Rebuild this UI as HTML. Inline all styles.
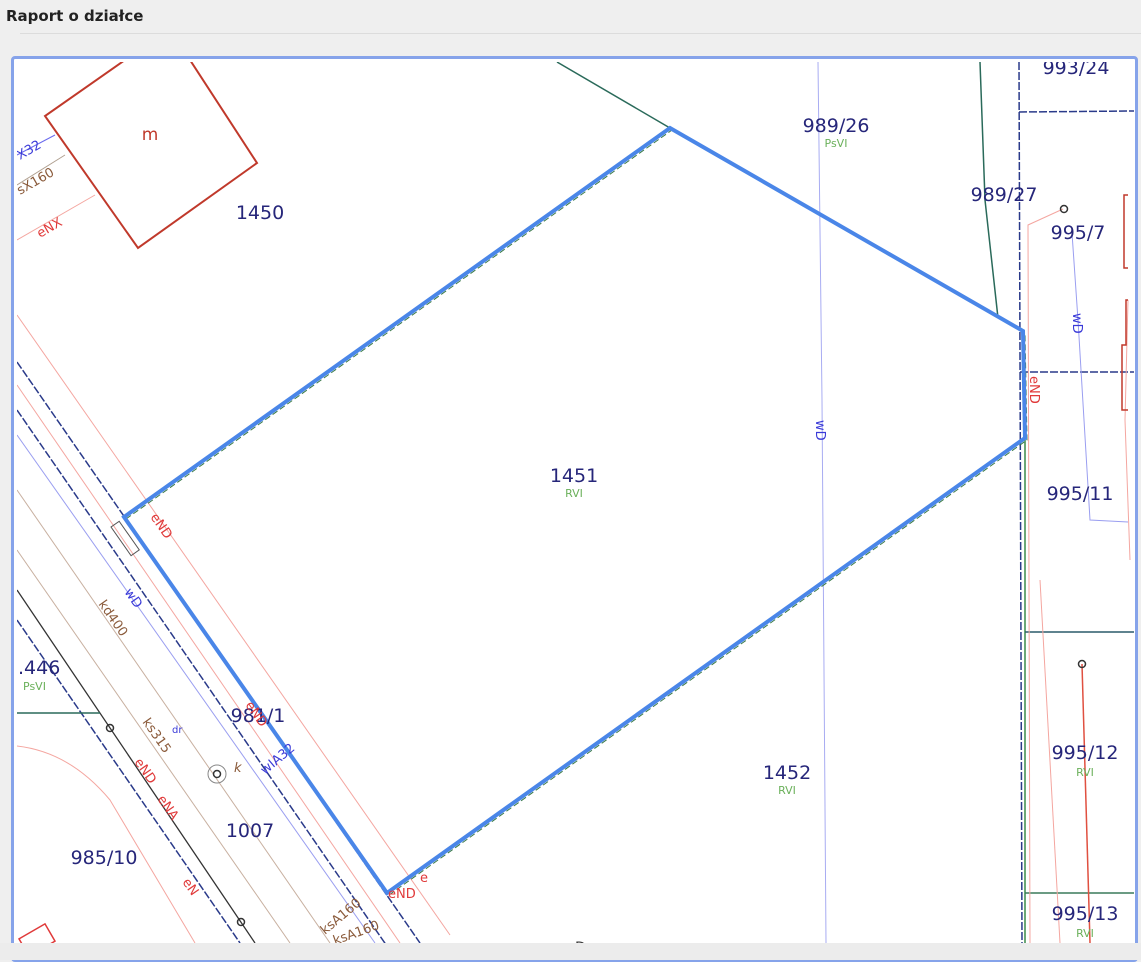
<!DOCTYPE html>
<html><head><meta charset="utf-8">
<style>
html,body{margin:0;padding:0;width:1141px;height:960px;overflow:hidden;background:#efefef;font-family:"DejaVu Sans","Liberation Sans",sans-serif;}
#hdr{position:absolute;left:6px;top:7px;font-size:15px;font-weight:bold;color:#222;}
#hl{position:absolute;left:20px;top:33px;width:1121px;height:1px;background:#dcdcdc;}
#frame{position:absolute;left:11px;top:56px;width:1121px;height:900px;border:3px solid #86a3ea;border-radius:4px;background:#fff;}
svg{position:absolute;left:0;top:0;}
#foot{position:absolute;left:0;top:943px;width:1141px;height:17px;background:#ececec;}
</style></head><body>
<div id="hdr">Raport o działce</div>
<div id="hl"></div>
<div id="frame"></div>
<svg width="1141" height="960" viewBox="0 0 1141 960" font-family="DejaVu Sans, sans-serif">
<defs><clipPath id="c"><rect x="17" y="62" width="1117" height="881"/></clipPath></defs>
<g clip-path="url(#c)" fill="none">
<line x1="17" y1="315" x2="450" y2="935" stroke="#f4a6a0" stroke-width="1"/>
<line x1="17" y1="385" x2="400" y2="943" stroke="#f4a6a0" stroke-width="1"/>
<line x1="17" y1="362" x2="420" y2="943" stroke="#2a3a8a" stroke-width="1.5" stroke-dasharray="8,2"/>
<line x1="17" y1="410" x2="400" y2="965" stroke="#2a3a8a" stroke-width="1.5" stroke-dasharray="8,2"/>
<line x1="17" y1="435" x2="375" y2="943" stroke="#9a9ef0" stroke-width="1"/>
<line x1="17" y1="490" x2="330" y2="943" stroke="#c8b0a0" stroke-width="1"/>
<line x1="17" y1="550" x2="290" y2="943" stroke="#c8b0a0" stroke-width="1"/>
<line x1="17" y1="590" x2="255" y2="943" stroke="#333" stroke-width="1.3"/>
<line x1="17" y1="620" x2="240" y2="943" stroke="#2a3a8a" stroke-width="1.5" stroke-dasharray="8,2"/>
<path d="M17 746 Q70 752 110 800 L195 943" stroke="#f4a6a0" stroke-width="1"/>
<line x1="17" y1="713" x2="100" y2="713" stroke="#2a6a5a" stroke-width="1.5"/>
<rect x="0" y="0" width="10" height="35" stroke="#555" transform="translate(111,527) rotate(-35)"/>
<path d="M125 60 L45 116 L138 248 L257 163 L190 60" stroke="#c0392b" stroke-width="2"/>
<line x1="17" y1="240" x2="95" y2="195" stroke="#f4a6a0"/>
<line x1="17" y1="185" x2="65" y2="155" stroke="#b0a090"/>
<line x1="17" y1="155" x2="55" y2="135" stroke="#6a6aee"/>
<line x1="557" y1="62" x2="670" y2="128" stroke="#2a6a5a" stroke-width="1.5"/>
<path d="M818 62 L822 400 L826 943" stroke="#a8acf2" stroke-width="1"/>
<path d="M980 62 L985 200 L998 318" stroke="#2a6a5a" stroke-width="1.5"/>
<line x1="1019" y1="62" x2="1022" y2="943" stroke="#2a3a8a" stroke-width="1.5" stroke-dasharray="8,2"/>
<line x1="1025" y1="440" x2="1025" y2="943" stroke="#3a8a4a" stroke-width="1.5"/>
<line x1="1019" y1="112" x2="1134" y2="111" stroke="#2a3a8a" stroke-width="1.5" stroke-dasharray="8,2"/>
<line x1="1020" y1="372" x2="1134" y2="372" stroke="#2a3a8a" stroke-width="1.5" stroke-dasharray="8,2"/>
<line x1="1025" y1="632" x2="1134" y2="632" stroke="#2a5a6a" stroke-width="1.5"/>
<line x1="1025" y1="893" x2="1134" y2="893" stroke="#3a7a5a" stroke-width="1.5"/>
<path d="M1063 209 L1028 225 L1030 943" stroke="#f4a6a0"/>
<path d="M1072 233 L1078 320 L1090 520 L1128 522" stroke="#9a9ef0"/>
<path d="M1040 580 L1060 943" stroke="#f4a6a0"/>
<path d="M1082 664 L1090 943" stroke="#e05040" stroke-width="1.5"/>
<path d="M1128 300 L1125 420 L1130 560" stroke="#f4a6a0"/>
<path d="M1128 195 L1124 195 L1124 268 L1128 268 M1128 300 L1126 300 L1126 345 L1122 345 L1122 410 L1128 410" stroke="#c0392b" stroke-width="1.5"/>
<circle cx="1064" cy="209" r="3.5" stroke="#333" stroke-width="1.5"/>
<circle cx="1082" cy="664" r="3.5" stroke="#333" stroke-width="1.5"/>
<circle cx="110" cy="728" r="3.5" stroke="#333" stroke-width="1.5"/>
<circle cx="241" cy="922" r="3.5" stroke="#333" stroke-width="1.5"/>
<circle cx="217" cy="774" r="9" stroke="#888"/><circle cx="217" cy="774" r="3.5" stroke="#333" stroke-width="1.5"/>
<path d="M124 517 L670 128 L1023 331 L1025 438 L387 893 Z" stroke="#3a7a4a" stroke-width="1" stroke-dasharray="6,3" transform="translate(2,2)"/>
<path d="M124 517 L670 128 L1023 331 L1025 438 L387 893 Z" stroke="#4a86e8" stroke-width="4"/>
<g font-size="19" fill="#26267a" stroke="none">
<text x="574" y="482" text-anchor="middle">1451</text>
<text x="260" y="219" text-anchor="middle">1450</text>
<text x="836" y="132" text-anchor="middle">989/26</text>
<text x="1004" y="201" text-anchor="middle">989/27</text>
<text x="1078" y="239" text-anchor="middle">995/7</text>
<text x="1076" y="74" text-anchor="middle">993/24</text>
<text x="1080" y="500" text-anchor="middle">995/11</text>
<text x="1085" y="759" text-anchor="middle">995/12</text>
<text x="1085" y="920" text-anchor="middle">995/13</text>
<text x="787" y="779" text-anchor="middle">1452</text>
<text x="104" y="864" text-anchor="middle">985/10</text>
<text x="250" y="837" text-anchor="middle">1007</text>
<text x="18" y="674">.446</text>
<text x="258" y="722" text-anchor="middle">981/1</text>
</g>
<g font-size="11" fill="#6ab05a">
<text x="574" y="497" text-anchor="middle">RVI</text>
<text x="836" y="147" text-anchor="middle">PsVI</text>
<text x="787" y="794" text-anchor="middle">RVI</text>
<text x="1085" y="776" text-anchor="middle">RVI</text>
<text x="1085" y="937" text-anchor="middle">RVI</text>
<text x="23" y="690">PsVI</text>
</g>
<text x="150" y="140" font-size="17" fill="#c0392b" text-anchor="middle">m</text>
<g font-size="13">
<text transform="translate(816,420) rotate(90)" fill="#3a3ad8">wD</text>
<text transform="translate(1073,313) rotate(90)" fill="#3a3ad8">wD</text>
<text transform="translate(1030,376) rotate(90)" fill="#e03a3a">eND</text>
<text transform="translate(150,517) rotate(55)" fill="#e03a3a">eND</text>
<text transform="translate(124,592) rotate(55)" fill="#3a3ad8">wD</text>
<text transform="translate(98,604) rotate(55)" fill="#8a5a3a">kd400</text>
<text transform="translate(142,722) rotate(55)" fill="#8a5a3a">ks315</text>
<text transform="translate(134,762) rotate(55)" fill="#e03a3a">eND</text>
<text transform="translate(157,799) rotate(55)" fill="#e03a3a">eNA</text>
<text transform="translate(182,882) rotate(55)" fill="#e03a3a">eN</text>
<text transform="translate(245,705) rotate(55)" fill="#e03a3a">eND</text>
<text transform="translate(265,775) rotate(-40)" fill="#3a3ad8">wIA32</text>
<text transform="translate(325,935) rotate(-40)" fill="#8a5a3a">ksA160</text>
<text transform="translate(335,945) rotate(-20)" fill="#8a5a3a">ksA160</text>
<text x="388" y="898" fill="#e03a3a">eND</text>
<text x="420" y="882" fill="#e03a3a">e</text>
<text x="172" y="733" fill="#3a3ad8" font-size="10">dr</text>
<text x="234" y="772" fill="#8a5a3a" font-style="italic">k</text>
<text transform="translate(20,160) rotate(-30)" fill="#3a3ad8">X32</text>
<text transform="translate(20,195) rotate(-30)" fill="#8a5a3a">sX160</text>
<text transform="translate(40,238) rotate(-30)" fill="#e03a3a">eNX</text>
</g>
<rect x="22" y="930" width="30" height="20" stroke="#e03a3a" stroke-width="1.5" transform="rotate(-30 37 940)"/>
<text x="575" y="952" font-size="14" fill="#333">Dane</text>
</g>
</svg>
<div id="foot"></div>
</body></html>
